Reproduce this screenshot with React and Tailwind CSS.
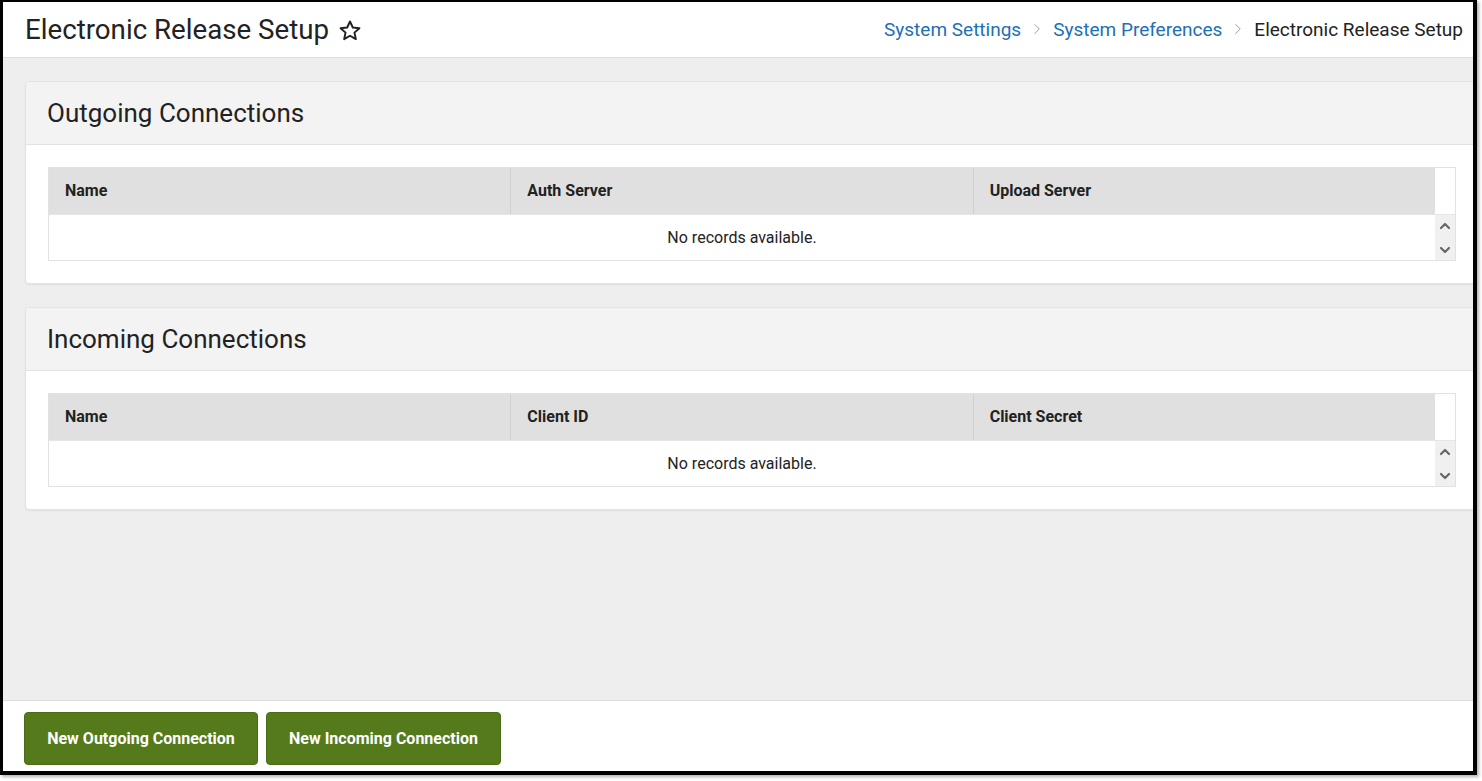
import React from 'react'
import { ChevronRight, ChevronUp, ChevronDown } from 'lucide-react'

const StarOutline = () => (
    <svg width="26" height="26" viewBox="0 0 24 24" className="ml-[8px] mt-[2px]">
        <path
            d="M12 3.2l2.6 5.6 6.1.6-4.6 4.1 1.3 6-5.4-3.1-5.4 3.1 1.3-6-4.6-4.1 6.1-.6z"
            fill="none"
            stroke="#222"
            strokeWidth="1.8"
            strokeLinejoin="round"
        />
    </svg>
)

const ConnectionsPanel = ({ title, columns }) => (
    <div className="bg-white border border-[#e2e2e2] rounded-[4px] mr-[-6px] shadow-[0_1px_2px_rgba(0,0,0,0.06)]">
        <div className="h-[63px] bg-[#f3f3f3] border-b border-[#e2e2e2] rounded-t-[4px] flex items-center px-[21px]">
            <h2 className="text-[26px] text-[#222] leading-none">{title}</h2>
        </div>
        <div className="px-[22px] pt-[22px] pb-[22px]">
            <div className="border border-[#e2e2e2]">
                <div className="flex h-[46px]">
                    <div className="flex flex-1 bg-[#e0e0e0]">
                        {columns.map((col, i) => (
                            <div
                                key={col}
                                className={`flex-1 flex items-center pl-[16px] font-bold text-[16px] text-[#222] ${
                                    i > 0 ? 'border-l border-[#d0d0d0]' : ''
                                }`}
                            >
                                {col}
                            </div>
                        ))}
                    </div>
                    <div className="w-[20px] bg-white" />
                </div>
                <div className="flex h-[46px] border-t border-[#e6e6e6]">
                    <div className="flex-1 flex items-center justify-center text-[16px] text-[#222]">
                        No records available.
                    </div>
                    <div className="w-[20px] bg-[#f0f0f0] flex flex-col items-center justify-center gap-[8px] text-[#666]">
                        <ChevronUp size={16} strokeWidth={3.2} />
                        <ChevronDown size={16} strokeWidth={3.2} />
                    </div>
                </div>
            </div>
        </div>
    </div>
)

const App = () => {
    return (
        <div className="w-[1482px] h-[781px] bg-white font-['Roboto',sans-serif]">
            <div className="w-[1477px] h-[775px] border-l-[3px] border-t-[2px] border-r-[4px] border-b-[4px] border-black shadow-[2px_2px_3px_rgba(0,0,0,0.3)] flex flex-col overflow-hidden">
                <div className="h-[56px] bg-white border-b border-[#dddddd] flex items-center justify-between pl-[22px] pr-[10px]">
                    <div className="flex items-center">
                        <h1 className="text-[27.7px] text-[#222] leading-none">Electronic Release Setup</h1>
                        <StarOutline />
                    </div>
                    <div className="flex items-center text-[19px] leading-none pb-[1px]">
                        <span className="text-[#1d6fb8]">System Settings</span>
                        <ChevronRight size={18} strokeWidth={1.3} className="text-[#999] mx-[7px]" />
                        <span className="text-[#1d6fb8]">System Preferences</span>
                        <ChevronRight size={18} strokeWidth={1.3} className="text-[#999] mx-[7px]" />
                        <span className="text-[#222]">Electronic Release Setup</span>
                    </div>
                </div>
                <div className="h-[642px] bg-[#eeeeee] pl-[22px] pt-[23px] flex flex-col gap-[23px]">
                    <ConnectionsPanel title="Outgoing Connections" columns={['Name', 'Auth Server', 'Upload Server']} />
                    <ConnectionsPanel title="Incoming Connections" columns={['Name', 'Client ID', 'Client Secret']} />
                </div>
                <div className="flex-1 bg-white border-t border-[#dddddd] flex items-start pt-[11px] pl-[21px] gap-[8px]">
                    <button className="w-[234px] h-[53px] bg-[#557a1c] rounded-[4px] text-white font-bold text-[16px] border border-[#4a6c16]">
                        New Outgoing Connection
                    </button>
                    <button className="w-[235px] h-[53px] bg-[#557a1c] rounded-[4px] text-white font-bold text-[16px] border border-[#4a6c16]">
                        New Incoming Connection
                    </button>
                </div>
            </div>
        </div>
    )
}

export default App
